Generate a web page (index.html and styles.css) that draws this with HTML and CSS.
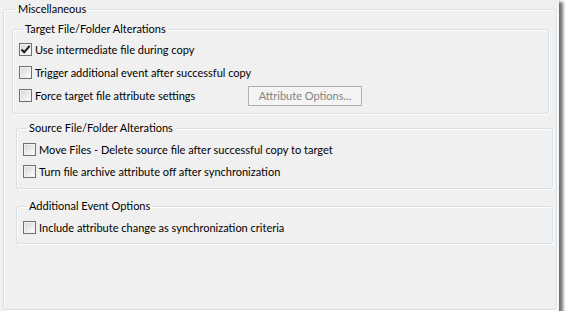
FILE: index.html
```html
<!DOCTYPE html>
<html lang="en">
<head>
<meta charset="UTF-8">
<meta name="viewport" content="width=device-width, initial-scale=1.0">
<link rel="stylesheet" href="styles.css">
</head>
<body>

<div class="panel">
    <fieldset class="group outer">
        <legend>Miscellaneous</legend>

        <!-- target side -->
        <fieldset class="group target">
            <legend>Target File/Folder Alterations</legend>
            <div class="row">
                <span class="box checked">
                    <svg width="11" height="11" viewBox="0 0 11 11"><path d="M1.5 5.5 L4.2 8.3 L9.6 1.8" fill="none" stroke="#1a1a1a" stroke-width="2"/></svg>
                </span>
                <span class="text">Use intermediate file during copy</span>
            </div>
            <div class="row">
                <span class="box"></span>
                <span class="text">Trigger additional event after successful copy</span>
            </div>
            <div class="row">
                <span class="box"></span>
                <span class="text fixed">Force target file attribute settings</span>
                <button class="btn" disabled>Attribute Options...</button>
            </div>
        </fieldset>

        <!-- source side -->
        <fieldset class="group source">
            <legend>Source File/Folder Alterations</legend>
            <div class="row short">
                <span class="box"></span>
                <span class="text">Move Files - Delete source file after successful copy to target</span>
            </div>
            <div class="row short">
                <span class="box"></span>
                <span class="text">Turn file archive attribute off after synchronization</span>
            </div>
        </fieldset>

        <fieldset class="group events">
            <legend>Additional Event Options</legend>
            <div class="row short">
                <span class="box"></span>
                <span class="text">Include attribute change as synchronization criteria</span>
            </div>
        </fieldset>
    </fieldset>
</div>

</body>
</html>
```

FILE: styles.css
```css
* {
    box-sizing: border-box;
}
body {
    margin: 0;
    background-color: #ffffff;
    font-family: Lato, "Liberation Sans", sans-serif;
    font-size: 11px;
    color: #000;
}
.panel {
    width: 559px;
    height: 311px;
    padding: 2px 0 0 3px;
    background-color: #f0f0f0;
    box-shadow: 3px 3px 3px 1px rgba(0, 0, 0, 0.55);
}

/* windows style group boxes */
.group {
    margin: 0;
    min-width: 0;
    border: 1px solid #d5dfe5;
    border-radius: 3px;
    box-shadow: inset 1px 1px 0 #fff, 1px 1px 0 #fff;
}
.group legend {
    margin-left: 4px;
    padding: 0 2px;
    height: 14px;
    line-height: 14px;
}
.outer {
    width: 554px;
    height: 308px;
    padding: 6px 0 0 8px;
}
.target {
    width: 537px;
    padding: 2px 6px 6px 6px;
}
.source {
    width: 537px;
    margin: 7px 0 0 4px;
    padding: 3px 6px 6px 6px;
}
.events {
    width: 537px;
    margin: 10px 0 0 4px;
    padding: 3px 6px 5px 6px;
}

.row {
    display: flex;
    align-items: center;
    height: 23px;
}
.row.short {
    height: 22px;
}
.box {
    width: 13px;
    height: 13px;
    flex: none;
    margin-right: 3px;
    border: 1px solid #707070;
    background: linear-gradient(135deg, #d4d4d4, #ffffff);
    box-shadow: inset 0 0 0 1px #f2f2f2;
    display: flex;
    align-items: center;
    justify-content: center;
}
.text {
    white-space: nowrap;
}
.text.fixed {
    width: 213px;
}
.btn {
    width: 114px;
    height: 20px;
    padding: 0;
    font: inherit;
    color: #838383;
    background-color: #f4f4f4;
    border: 1px solid #adb2b5;
    border-radius: 0;
}
```
